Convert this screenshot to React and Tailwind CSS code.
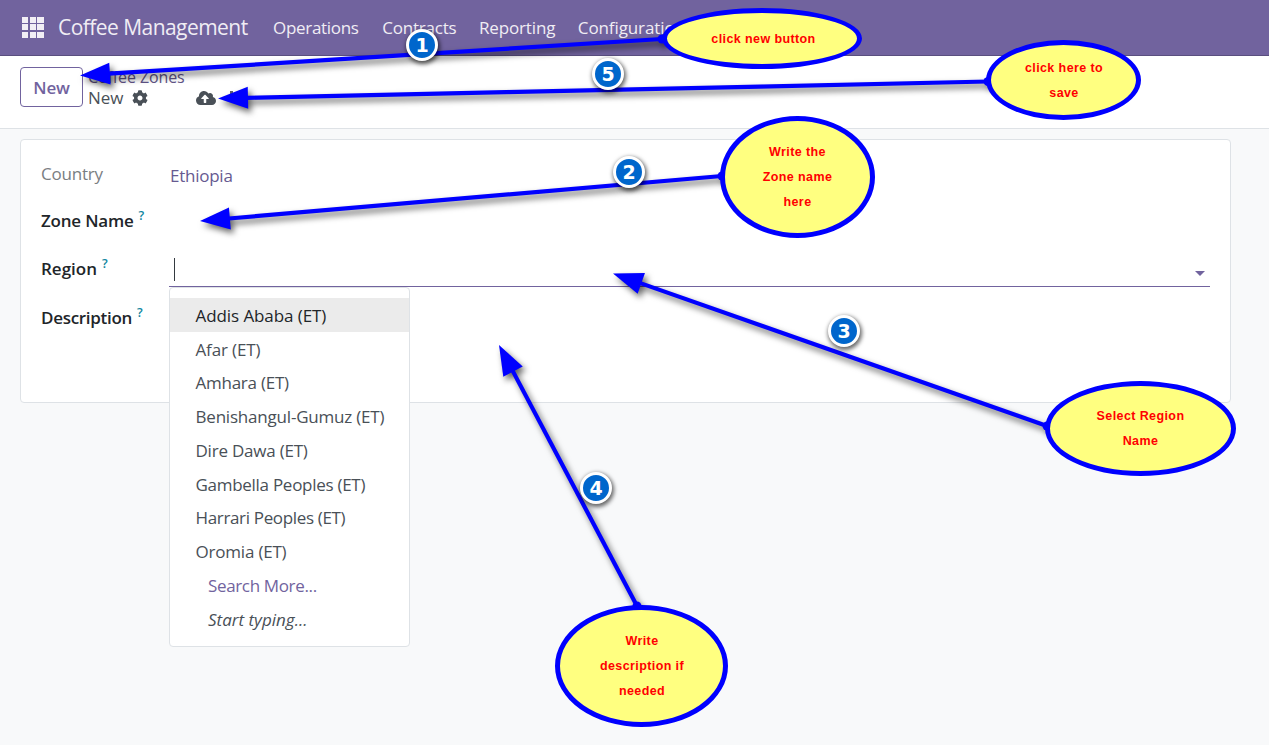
import React from 'react';
import { FaCog, FaCloudUploadAlt } from 'react-icons/fa';

const menu = [
  { label: 'Operations', cls: 'tracking-[-0.3px]' },
  { label: 'Contracts', cls: 'tracking-[-0.2px] ml-px' },
  { label: 'Reporting', cls: 'tracking-[-0.15px]' },
  { label: 'Configuration', cls: 'tracking-[-0.1px]' },
];

const regions = [
  { label: 'Addis Ababa (ET)', cls: 'bg-[#ebebeb] text-[#212529] tracking-[-0.08px]' },
  { label: 'Afar (ET)', cls: 'tracking-[-0.15px]' },
  { label: 'Amhara (ET)', cls: 'tracking-[-0.25px]' },
  { label: 'Benishangul-Gumuz (ET)', cls: 'tracking-[-0.2px]' },
  { label: 'Dire Dawa (ET)', cls: 'tracking-[-0.22px]' },
  { label: 'Gambella Peoples (ET)', cls: 'tracking-[-0.28px]' },
  { label: 'Harrari Peoples (ET)', cls: 'tracking-[-0.34px]' },
  { label: 'Oromia (ET)', cls: 'tracking-[-0.2px]' },
];

const arrows = [
  { from: [662, 39], tip: [80, 75.5] },
  { from: [988, 81.5], tip: [218, 98.5] },
  { from: [722, 176], tip: [200, 221] },
  { from: [1047, 426], tip: [613, 273.5] },
  { from: [637, 606], tip: [499, 345] },
];

const callouts = [
  { lines: ['click new button'], cls: 'left-[662px] top-[8px] h-[61px] w-[200px] pt-px pl-[3px]' },
  { lines: ['click here to', 'save'], cls: 'left-[986px] top-[40px] h-[80px] w-[155px] pt-0.5 pl-px' },
  { lines: ['Write the', 'Zone name', 'here'], cls: 'left-[720px] top-[116px] h-[122px] w-[155px]' },
  { lines: ['Select Region', 'Name'], cls: 'left-[1045px] top-[381px] h-[95px] w-[191px]' },
  { lines: ['Write', 'description if', 'needed'], cls: 'left-[555px] top-[605px] h-[122px] w-[173px] pl-px' },
];

const badges = [
  { n: 1, cls: 'left-[406px] top-[29px]' },
  { n: 5, cls: 'left-[592px] top-[58px]' },
  { n: 2, cls: 'left-[613px] top-[156px]' },
  { n: 3, cls: 'left-[828px] top-[315px]' },
  { n: 4, cls: 'left-[580px] top-[472px]' },
];

function AppsIcon() {
  return (
    <svg width="22" height="21" viewBox="0 0 22 21" fill="#f2eff5" shapeRendering="crispEdges">
      {[0, 7, 15].map((y) =>
        [0, 8, 15].map((x) => <rect key={x + '-' + y} x={x} y={y} width={x === 15 ? 7 : 6} height="6" />)
      )}
    </svg>
  );
}

function Arrow({ from, tip }) {
  const dx = tip[0] - from[0];
  const dy = tip[1] - from[1];
  const len = Math.hypot(dx, dy);
  const ux = dx / len;
  const uy = dy / len;
  const bx = tip[0] - ux * 30;
  const by = tip[1] - uy * 30;
  return (
    <g fill="#00f" stroke="none">
      <line x1={from[0]} y1={from[1]} x2={bx + ux} y2={by + uy} stroke="#00f" strokeWidth="4.2" />
      <circle cx={from[0]} cy={from[1]} r="4.5" />
      <polygon points={`${tip[0]},${tip[1]} ${bx - uy * 11},${by + ux * 11} ${bx + uy * 11},${by - ux * 11}`} />
    </g>
  );
}

function Label({ text, cls = '' }) {
  return (
    <div className={`flex h-[25px] items-center font-semibold text-[#212529] ${cls}`}>
      {text}
      <sup className="ml-[5px] top-[-4px] text-[12.5px] font-semibold leading-none text-[#0f86a0]">?</sup>
    </div>
  );
}

export default function App() {
  return (
    <div className="relative h-[745px] w-[1269px] overflow-hidden bg-[#f8f9fa] font-['Open_Sans',sans-serif] text-[17px] leading-[25px] text-[#495057]">
      <nav className="flex h-14 items-center border-b border-[#5a4f7f] bg-[#71639e] pl-[22px] text-[#f0edf4]">
        <AppsIcon />
        <div className="ml-3.5 w-[194px] whitespace-nowrap text-[21px] tracking-[-0.55px]">Coffee Management</div>
        <div className="ml-[21px] flex gap-[22.5px] whitespace-nowrap">
          {menu.map((m) => (
            <span key={m.label} className={m.cls}>{m.label}</span>
          ))}
        </div>
      </nav>

      <header className="flex h-[73px] items-start border-b border-[#dee2e6] bg-white pl-5 pt-[11px]">
        <button className="h-10 w-[63px] rounded-[4px] border border-[#71639e] font-semibold tracking-[-0.2px] text-[#71639e]">New</button>
        <div className="ml-[5px] flex flex-col">
          <div className="h-5 text-base font-medium leading-[21px] tracking-[-0.1px] text-[#5f5488]">Coffee Zones</div>
          <div className="flex h-[21px] items-center">
            <span className="tracking-[-0.1px]">New</span>
            <FaCog className="ml-[9px] mt-px h-4 w-4" />
            <FaCloudUploadAlt className="ml-12 h-[18px] w-5" />
            <span className="ml-3.5 mt-1 h-[3px] w-[3px] self-start bg-[#5f5f6f]" />
          </div>
        </div>
      </header>

      <main className="ml-5 mt-2.5 h-[264px] w-[1211px] rounded-[4px] border border-[#dee2e6] bg-white pl-5 pr-5 pt-[21px]">
        <div className="grid grid-cols-[128px_1fr]">
          <div className="h-[47px] tracking-[-0.2px] text-[#7a7e82]">Country</div>
          <div className="pl-px pt-0.5 tracking-[-0.25px] text-[#665a91]">Ethiopia</div>
          <Label text="Zone Name" cls="tracking-[-0.2px]" />
          <div className="h-[38px]" />
          <div className="pt-[10px]"><Label text="Region" /></div>
          <div className="flex h-[41px] items-center justify-between border-b border-[#71639e] pl-[5px] pr-[5px] pt-[7px]">
            <span className="h-[23px] w-px bg-[#343a40]" />
            <span className="mt-[7px] border-x-[5px] border-t-[5px] border-x-transparent border-t-[#71639e]" />
          </div>
          <div className="pt-[18px]"><Label text="Description" cls="tracking-[-0.3px]" /></div>
          <div />
        </div>
      </main>

      <div className="absolute left-[169px] top-[287px] w-[241px] rounded-[4px] border border-[#dee2e6] bg-white pb-[10px] pt-[10px]">
        {regions.map((r) => (
          <div key={r.label} className={`flex h-[33.75px] items-center pl-[25.5px] pt-px ${r.cls}`}>{r.label}</div>
        ))}
        <div className="flex h-[33.75px] items-center pl-[38px] pt-px tracking-[-0.35px] text-[#71639e]">Search More...</div>
        <div className="flex h-[33.75px] items-center pl-[38px] pt-px italic">Start typing...</div>
      </div>

      <svg
        className="pointer-events-none absolute left-0 top-0 [filter:drop-shadow(3px_4px_3px_rgba(0,0,0,0.6))]"
        width="1269"
        height="745"
      >
        {arrows.map((a) => (
          <Arrow key={a.tip[0]} from={a.from} tip={a.tip} />
        ))}
      </svg>

      {callouts.map((c) => (
        <div
          key={c.lines[0] + c.lines.length}
          className={`absolute flex flex-col items-center justify-center rounded-[50%] border-[5px] border-[#00f] bg-[#ffff80] font-['Liberation_Sans',sans-serif] text-[12.5px] font-bold tracking-[0.4px] text-[#f00] ${c.cls}`}
        >
          {c.lines.map((l) => (
            <span key={l} className="whitespace-nowrap">{l}</span>
          ))}
        </div>
      ))}

      {badges.map((b) => (
        <div
          key={b.n}
          className={`absolute flex h-8 w-8 items-center justify-center rounded-full border-[3px] border-white bg-[#0066cc] font-['DejaVu_Sans',sans-serif] text-[19px] font-bold text-white shadow-[1px_2px_4px_1px_rgba(0,0,0,0.6)] ${b.cls}`}
        >
          {b.n}
        </div>
      ))}
    </div>
  );
}
